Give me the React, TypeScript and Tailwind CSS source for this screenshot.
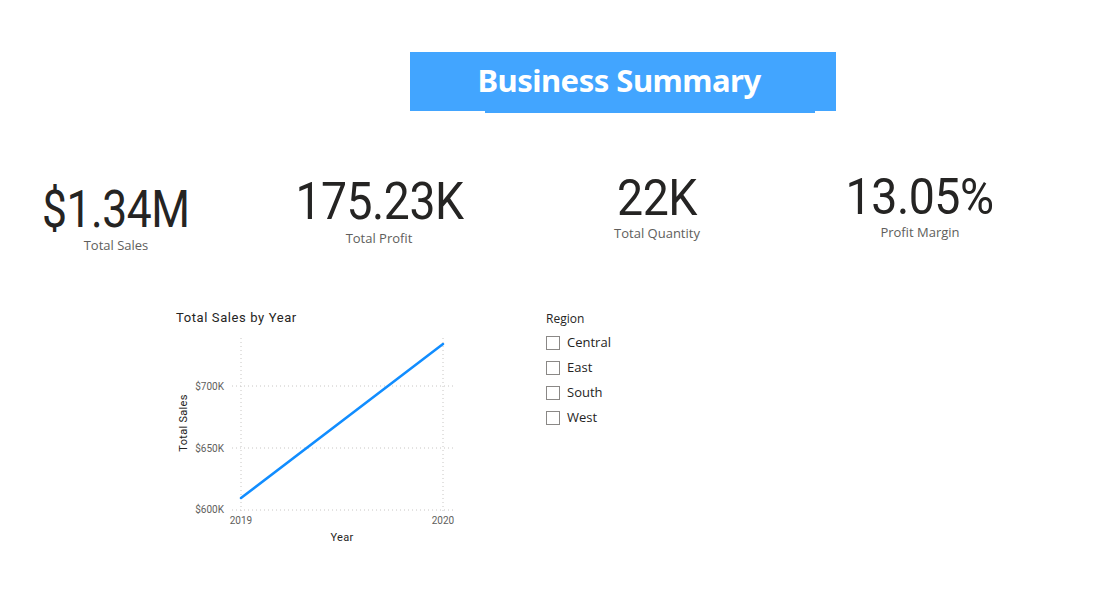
import React from "react";

const kpis = [
  { value: "$1.34M", label: "Total Sales", width: "w-[232px]", top: "mt-[71px]", size: "text-[51px] scale-x-[0.87]", gap: "mt-[1px]" },
  { value: "175.23K", label: "Total Profit", width: "w-[294px]", top: "mt-[63px]", size: "text-[52px] scale-x-[0.89]", gap: "mt-[1px]" },
  { value: "22K", label: "Total Quantity", width: "w-[262px]", top: "mt-[60px]", size: "text-[50px] scale-x-[0.93]", gap: "mt-[1px]" },
  { value: "13.05%", label: "Profit Margin", width: "w-[264px]", top: "mt-[59px]", size: "text-[50px] scale-x-[0.93]", gap: "mt-[1px]" },
];

const regions = ["Central", "East", "South", "West"];

function SalesChart() {
  const grid = "#c8c6c4";
  return (
    <svg width={310} height={250} viewBox="160 300 310 250" className="block">
      <text x={176} y={322} fontSize={13} fill="#252423" style={{ fontFamily: "Roboto, sans-serif", letterSpacing: "0.6px" }}>
        Total Sales by Year
      </text>
      {[386, 448, 510].map((y) => (
        <line key={y} x1={232} x2={453} y1={y} y2={y} stroke={grid} strokeWidth={1} strokeDasharray="1 3" />
      ))}
      {[241, 443].map((x) => (
        <line key={x} x1={x} x2={x} y1={338} y2={514} stroke={grid} strokeWidth={1} strokeDasharray="1 3" />
      ))}
      <g fontSize={10} fill="#605e5c" textAnchor="end" style={{ fontFamily: "Roboto, sans-serif" }}>
        <text x={224} y={390}>$700K</text>
        <text x={224} y={452}>$650K</text>
        <text x={224} y={513}>$600K</text>
      </g>
      <g fontSize={10} fill="#605e5c" textAnchor="middle" style={{ fontFamily: "Roboto, sans-serif" }}>
        <text x={241} y={524}>2019</text>
        <text x={443} y={524}>2020</text>
      </g>
      <text x={342} y={541} fontSize={11} fill="#252423" textAnchor="middle" style={{ fontFamily: "Roboto, sans-serif", letterSpacing: "0.3px" }}>
        Year
      </text>
      <text
        x={0}
        y={0}
        fontSize={11}
        fill="#252423"
        textAnchor="middle"
        transform="translate(187 423) rotate(-90)"
        style={{ fontFamily: "Roboto, sans-serif", letterSpacing: "0.3px" }}
      >
        Total Sales
      </text>
      <line x1={241} y1={498} x2={443} y2={344} stroke="#118dff" strokeWidth={2.5} strokeLinecap="round" />
    </svg>
  );
}

export default function App() {
  return (
    <div className="w-[1101px] h-[608px] bg-white overflow-hidden" style={{ fontFamily: "'Open Sans', sans-serif" }}>
      {/* Title banner */}
      <div className="pt-[52px] pl-[410px]">
        <div className="w-[426px] h-[59px] bg-[#42a5ff] flex items-center justify-center">
          <span className="text-white font-bold text-[31px] leading-none tracking-[-0.5px] -ml-[8px] -mt-[3px]" style={{ fontFamily: "'Noto Sans', sans-serif" }}>
            Business Summary
          </span>
        </div>
        <div className="ml-[75px] w-[330px] h-[2px] bg-[#42a5ff]" />
      </div>

      {/* KPI cards */}
      <div className="flex items-start">
        {kpis.map((k) => (
          <div key={k.label} className={`${k.width} ${k.top} flex flex-col items-center`}>
            <div className={`${k.size} leading-none text-[#252423] tracking-[-0.5px]`} style={{ fontFamily: "Roboto, sans-serif" }}>
              {k.value}
            </div>
            <div className={`${k.gap} text-[13px] text-[#605e5c]`}>{k.label}</div>
          </div>
        ))}
      </div>

      {/* Chart + slicer */}
      <div className="flex items-start mt-[44px]">
        <div className="ml-[160px]">
          <SalesChart />
        </div>
        <div className="ml-[76px] pt-[11px] flex flex-col">
          <div className="text-[12px] text-[#252423] leading-[15px] mb-[5px]">Region</div>
          {regions.map((r) => (
            <div key={r} className="flex items-center h-[25px]">
              <div className="w-[14px] h-[14px] border border-[#8a8886] bg-white" />
              <span className="ml-[7px] text-[13px] text-[#252423]">{r}</span>
            </div>
          ))}
        </div>
      </div>
    </div>
  );
}
